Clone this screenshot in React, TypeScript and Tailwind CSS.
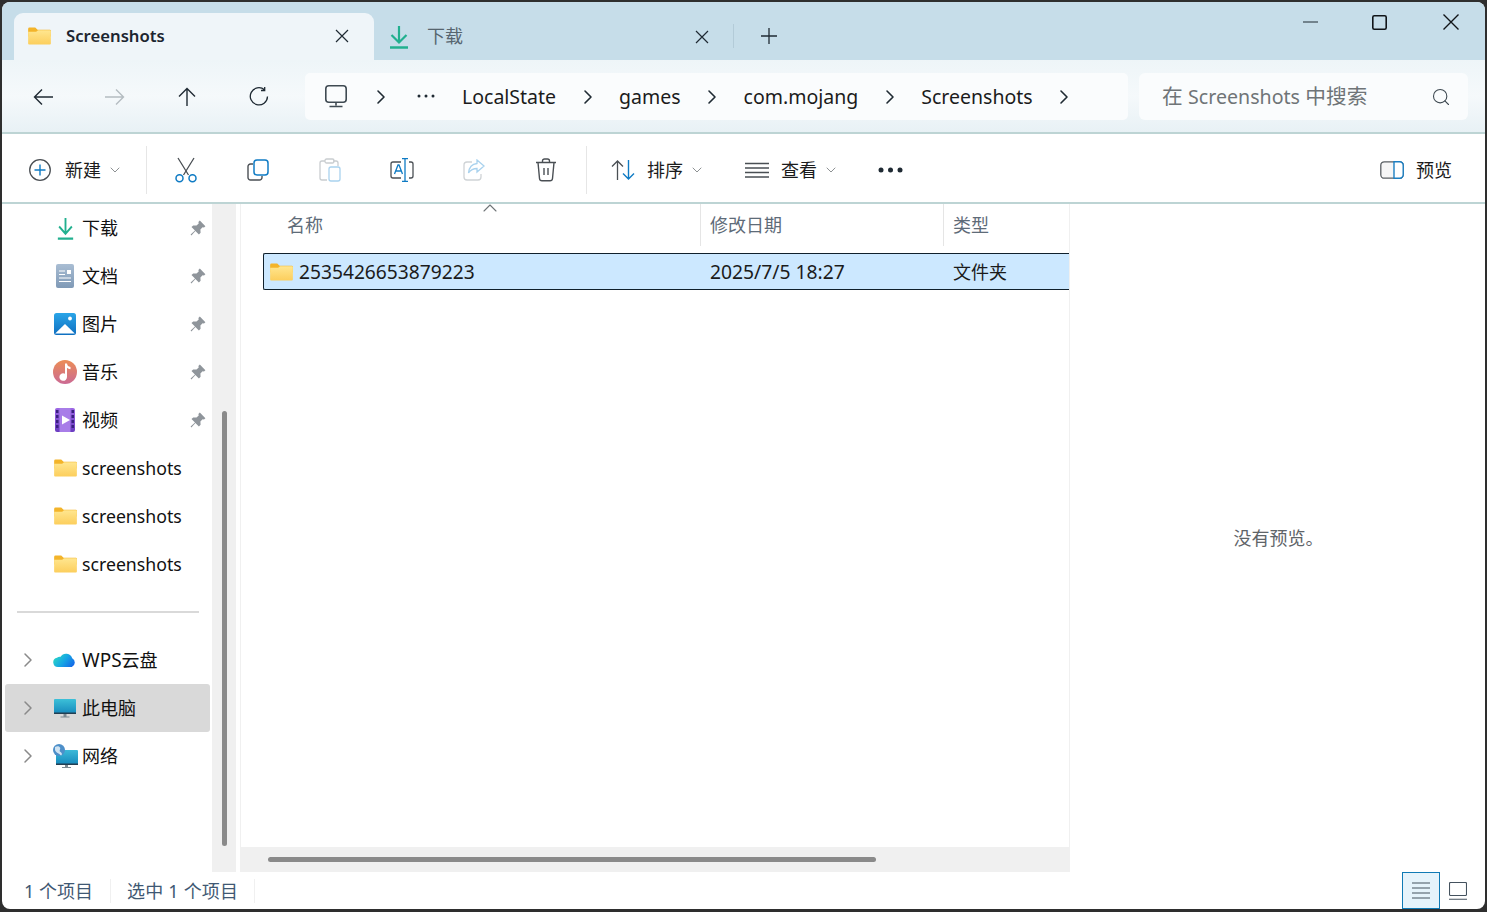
import type { ReactNode } from "react";
import { ChevronRight, ChevronDown, ChevronUp, Search } from "lucide-react";

const FONT = "font-['Noto_Sans','Noto_Sans_CJK_SC',sans-serif]";

function FolderIcon({ id = "f" }: { id?: string }) {
  return (
    <svg width="23" height="18" viewBox="0 0 24 19" className="shrink-0" aria-hidden>
      <defs>
        <linearGradient id={id} x1="0" y1="0" x2="0" y2="1">
          <stop offset="0" stopColor="#ffe68f" />
          <stop offset="1" stopColor="#fcce5c" />
        </linearGradient>
      </defs>
      <path d="M0 2a1.500 1.500 0 0 1 1.500-1.500h6L10 3h13a1 1 0 0 1 1 1v6H0z" fill="#f3b42a" />
      <path d="M0 5h8.500L10.500 3.500H23a1 1 0 0 1 1 1V17.500a1 1 0 0 1-1 1H1a1 1 0 0 1-1-1z" fill={`url(#${id})`} />
    </svg>
  );
}

function DownloadIcon({ w = 20, h = 24 }: { w?: number; h?: number }) {
  return (
    <svg width={w} height={h} viewBox="0 0 20 24" preserveAspectRatio="none" className="shrink-0" fill="none" stroke="#22b08f" aria-hidden>
      <path d="M10 1v16M2.500 10l7.500 7.500 7.500-7.500" strokeWidth="2.200" />
      <path d="M1 22.500h18" strokeWidth="2.400" />
    </svg>
  );
}

function Line({ d, w = 20, h = 20, vb = "0 0 20 20", color = "#1f2a33", sw = 1.3, className = "" }: { d: string; w?: number; h?: number; vb?: string; color?: string; sw?: number; className?: string }) {
  return (
    <svg width={w} height={h} viewBox={vb} fill="none" stroke={color} strokeWidth={sw} className={`shrink-0 ${className}`} aria-hidden>
      <path d={d} />
    </svg>
  );
}

function NavButton({ children }: { children: ReactNode }) {
  return <div className="w-[72px] h-[48px] flex items-center justify-center">{children}</div>;
}

function Crumb({ text }: { text: string }) {
  return (
    <>
      <span className="text-[19.500px] leading-[28px] text-[#1b1b1b] whitespace-nowrap">{text}</span>
      <span className="w-[63px] flex justify-center shrink-0">
        <ChevronRight size={24} strokeWidth={1.6} color="#1f2a33" />
      </span>
    </>
  );
}

function ToolIcon({ children }: { children: ReactNode }) {
  return <div className="w-[72px] h-[48px] flex items-center justify-center shrink-0">{children}</div>;
}

function Pin() {
  return (
    <svg width="16" height="16" viewBox="0 0 16 16" className="ml-auto mr-[4px] shrink-0" fill="#8f959b" aria-hidden>
      <path d="M9.800.6 15.400 6.200 14 7.600 12.600 7.300 10.400 9.500 10.600 12.800 8.900 14.500 5.400 11 1.400 15.400.6 14.600 5 10.600 1.500 7.100 3.200 5.400 6.500 5.600 8.700 3.400 8.400 2z" />
    </svg>
  );
}

function NavRow({ icon, label, pin, arrow, active }: { icon: ReactNode; label: ReactNode; pin?: boolean; arrow?: boolean; active?: boolean }) {
  return (
    <div className={`h-[48px] ml-[3px] w-[205px] flex items-center rounded-[3px] ${active ? "bg-[#d9d9d9]" : ""}`}>
      <div className="w-[44px] flex justify-center shrink-0 pl-[2px]">
        {arrow ? <ChevronRight size={24} strokeWidth={1.5} color="#8a8a8a" /> : null}
      </div>
      <div className="w-[32px] flex justify-center shrink-0 mr-[1px]">{icon}</div>
      <div className="text-[18px] leading-[24px] text-[#111] whitespace-nowrap">{label}</div>
      {pin ? <Pin /> : null}
    </div>
  );
}

function DocsIcon() {
  return (
    <svg width="18" height="24" viewBox="0 0 18 24" aria-hidden>
      <defs>
        <linearGradient id="docs" x1="0" y1="0" x2="0" y2="1">
          <stop offset="0" stopColor="#a9bdd3" />
          <stop offset="1" stopColor="#7f99b6" />
        </linearGradient>
      </defs>
      <rect width="18" height="24" rx="2" fill="url(#docs)" />
      <path d="M3 7h6M3 10.500h6M3 14h12M3 17.500h12" stroke="#fff" strokeWidth="1" />
      <rect x="11" y="6" width="4" height="4" fill="#fff" />
    </svg>
  );
}

function PicturesIcon() {
  return (
    <svg width="22" height="22" viewBox="0 0 22 22" aria-hidden>
      <defs>
        <linearGradient id="pic" x1="0" y1="0" x2="0" y2="1">
          <stop offset="0" stopColor="#2aa5e8" />
          <stop offset="1" stopColor="#0f6fc0" />
        </linearGradient>
      </defs>
      <rect width="22" height="22" rx="2.500" fill="url(#pic)" />
      <circle cx="16" cy="5.500" r="1.900" fill="#fff" />
      <path d="M1.200 20.500 11 11l9.800 9.500z" fill="#fff" />
    </svg>
  );
}

function MusicIcon() {
  return (
    <svg width="24" height="24" viewBox="0 0 24 24" aria-hidden>
      <defs>
        <linearGradient id="mus" x1="0" y1="0" x2="0" y2="1">
          <stop offset="0" stopColor="#ec8d56" />
          <stop offset="1" stopColor="#cb6a94" />
        </linearGradient>
      </defs>
      <circle cx="12" cy="12" r="12" fill="url(#mus)" />
      <path d="M12 3.500h2c.2 2 1.400 3.200 3.500 3.500v2.200c-1.500-.1-2.600-.6-3.500-1.400V17a3.800 3.800 0 1 1-2-3.300z" fill="#fff" />
    </svg>
  );
}

function VideoIcon() {
  return (
    <svg width="20" height="24" viewBox="0 0 20 24" aria-hidden>
      <defs>
        <linearGradient id="vid" x1="0" y1="0" x2="0" y2="1">
          <stop offset="0" stopColor="#9d68e4" />
          <stop offset="1" stopColor="#6a3cc0" />
        </linearGradient>
      </defs>
      <rect width="20" height="24" rx="2" fill="url(#vid)" />
      <rect x="4.500" y="0" width="11" height="24" fill="#a87de8" />
      <path d="M7 7.500l8 4.500-8 4.500z" fill="#fff" />
      {[2, 7, 12, 17].map((y) => (
        <g key={y} fill="#3a2080">
          <rect x="1" y={y} width="2.500" height="3" />
          <rect x="16.500" y={y} width="2.500" height="3" />
        </g>
      ))}
    </svg>
  );
}

function CloudIcon() {
  return (
    <svg width="24" height="17" viewBox="0 0 24 17" className="mb-[3px]" aria-hidden>
      <defs>
        <linearGradient id="cl" x1="0" y1="0.300" x2="1" y2="0.800">
          <stop offset="0" stopColor="#2bd6c4" />
          <stop offset="0.500" stopColor="#16a6e4" />
          <stop offset="1" stopColor="#1566e8" />
        </linearGradient>
      </defs>
      <path d="M5 17a4.700 4.700 0 0 1-1-9.300 4.400 4.400 0 0 1 3.600-1 6.400 6.400 0 0 1 11.600 1.600A4.800 4.800 0 0 1 18.800 17z" fill="url(#cl)" />
    </svg>
  );
}

function PcIcon() {
  return (
    <svg width="22" height="19" viewBox="0 0 22 19" aria-hidden className="shrink-0">
      <defs>
        <linearGradient id="pc" x1="0" y1="0" x2="0" y2="1">
          <stop offset="0" stopColor="#3cc0d8" />
          <stop offset="1" stopColor="#1588bc" />
        </linearGradient>
      </defs>
      <rect width="22" height="15" rx="1" fill="url(#pc)" />
      <rect y="13.500" width="22" height="1.500" fill="#243f52" />
      <path d="M9.500 15h3v2.500h-3zM6.500 17.500h9v1h-9z" fill="#7d8a92" />
    </svg>
  );
}

function NetIcon() {
  return (
    <svg width="25" height="24" viewBox="0 0 25 24" aria-hidden>
      <defs>
        <linearGradient id="net" x1="0" y1="0" x2="0" y2="1">
          <stop offset="0" stopColor="#3cb9d8" />
          <stop offset="1" stopColor="#1588bc" />
        </linearGradient>
      </defs>
      <rect x="3" y="6" width="22" height="15" rx="1" fill="url(#net)" />
      <rect x="3" y="19.500" width="22" height="1.500" fill="#243f52" />
      <path d="M12 21h3v2h-3zM9 23h9v1H9z" fill="#7d8a92" />
      <circle cx="6" cy="6" r="6" fill="#4d8fc9" />
      <path d="M2 3c2-1 4-1 5 .5S5.500 7 7.500 8 9 11 8 11.500C6 9 3 9 2 6z" fill="#cfe3f2" />
    </svg>
  );
}

function ColumnHead({ children, className }: { children: ReactNode; className: string }) {
  return (
    <div className={`h-[42px] flex items-center text-[18px] text-[#5e6b78] ${className}`}>{children}</div>
  );
}

export default function App() {
  return (
    <div className={`w-[1487px] h-[912px] bg-[#2e2e2e] pt-[2px] px-[2px] pb-[3px] ${FONT}`}>
      <div className="h-full rounded-[8px] overflow-hidden flex flex-col bg-white">
        {/* tabs */}
        <div className="h-[58px] bg-[#c6dde9] flex shrink-0 pl-[12px]">
          <div className="mt-[11px] w-[360px] h-[47px] bg-[#eff5f9] rounded-t-[9px] flex items-center pl-[14px] pb-[1px] shrink-0">
            <FolderIcon id="tabf" />
            <span className="ml-[15px] text-[16.700px] font-semibold text-[#1c2530]">Screenshots</span>
            <svg width="14" height="14" viewBox="0 0 14 14" className="ml-auto mr-[25px]" stroke="#1f2a33" strokeWidth="1.200" aria-hidden>
              <path d="M1 1l12 12M13 1 1 13" />
            </svg>
          </div>
          <div className="mt-[11px] h-[47px] w-[359px] flex items-center pl-[15px] shrink-0">
            <DownloadIcon />
            <span className="ml-[18px] text-[18px] text-[#56656f]">下载</span>
            <svg width="14" height="14" viewBox="0 0 14 14" className="ml-auto mr-[24px]" stroke="#1f2a33" strokeWidth="1.200" aria-hidden>
              <path d="M1 1l12 12M13 1 1 13" />
            </svg>
          </div>
          <div className="mt-[22px] h-[24px] w-px bg-[#b3cbd8] shrink-0" />
          <div className="mt-[22px] ml-[27px] h-[24px] flex items-center">
            <Line d="M8 0v16M0 8h16" w={16} h={16} vb="0 0 16 16" sw={1.3} />
          </div>
          <div className="ml-auto flex h-[40px] items-center pr-[26px]">
            <Line d="M0 7h15" w={15} h={14} vb="0 0 15 14" sw={1.2} />
            <svg width="15" height="15" viewBox="0 0 15 15" className="ml-[54px]" fill="none" stroke="#101418" strokeWidth="1.600" aria-hidden>
              <rect x="0.800" y="0.800" width="13.400" height="13.400" rx="1.500" />
            </svg>
            <Line d="M.5.5l15 15M15.500.5l-15 15" w={16} h={16} vb="0 0 16 16" sw={1.4} color="#101418" className="ml-[56px]" />
          </div>
        </div>

        {/* address bar */}
        <div className="h-[74px] shrink-0 border-b-2 border-[#bdd4d4] bg-linear-to-b from-[#eef5f8] via-[#f5f9fb] to-[#e8f1f5] flex items-center pl-[5px] pr-[17px] pt-[1px]">
          <NavButton>
            <Line d="M20 9H1.500M9 1.500 1.500 9 9 16.500" w={20} h={18} vb="0 0 20 18" sw={1.4} />
          </NavButton>
          <NavButton>
            <Line d="M0 9h18.500M11 1.500 18.500 9 11 16.500" w={20} h={18} vb="0 0 20 18" sw={1.4} color="#b4bcc1" />
          </NavButton>
          <NavButton>
            <Line d="M9 19V1.500M1 9.500l8-8 8 8" w={18} h={20} vb="0 0 18 20" sw={1.4} />
          </NavButton>
          <NavButton>
            <Line d="M15.500 2.800A8.600 8.600 0 1 0 18.500 9.500M15.700 0v3.500h-3.700" w={20} h={20} vb="0 0 20 20" sw={1.3} />
          </NavButton>
          <div className="ml-[10px] w-[823px] h-[47px] rounded-[5px] bg-[#fafcfd] flex items-center pl-[20px] shrink-0">
            <svg width="22" height="23" viewBox="0 0 22 23" fill="none" stroke="#3f4a52" strokeWidth="1.600" className="shrink-0" aria-hidden>
              <rect x="0.800" y="0.800" width="20.400" height="16.400" rx="3" />
              <path d="M11 17.500v3M4.500 21.500h13" />
            </svg>
            <span className="w-[67px] flex justify-center shrink-0">
              <ChevronRight size={24} strokeWidth={1.6} color="#1f2a33" />
            </span>
            <svg width="18" height="4" viewBox="0 0 18 4" fill="#1f2a33" className="shrink-0 -mt-[1px] ml-[3px]" aria-hidden>
              <circle cx="2" cy="2" r="1.500" />
              <circle cx="9" cy="2" r="1.500" />
              <circle cx="16" cy="2" r="1.500" />
            </svg>
            <span className="w-[27px] shrink-0" />
            <Crumb text="LocalState" />
            <Crumb text="games" />
            <Crumb text="com.mojang" />
            <Crumb text="Screenshots" />
          </div>
          <div className="ml-[11px] w-[329px] h-[47px] rounded-[6px] bg-[#fafcfd] flex items-center pl-[23px] pr-[17px] shrink-0">
            <span className="text-[20.700px] text-[#6f7477] whitespace-nowrap">
              在 <span className="text-[19.600px]">Screenshots</span> 中搜索
            </span>
            <Search size={20} strokeWidth={1.3} color="#3f4a52" className="ml-auto" />
          </div>
        </div>

        {/* toolbar */}
        <div className="h-[70px] shrink-0 border-b-2 border-[#bdd4d4] flex items-center pl-[27px] pr-[33px] pt-[4px] text-[18px] text-[#1b1b1b]">
          <svg width="22" height="22" viewBox="0 0 22 22" fill="none" className="shrink-0" aria-hidden>
            <circle cx="11" cy="11" r="10.300" stroke="#4a4f54" strokeWidth="1.300" />
            <path d="M11 5.500v11M5.500 11h11" stroke="#0f7bc4" strokeWidth="1.400" />
          </svg>
          <span className="ml-[14px]">新建</span>
          <ChevronDown size={16} strokeWidth={1.3} color="#7b7f82" className="ml-[6px]" />
          <div className="ml-[23px] w-px h-[48px] bg-[#e6e6e6] shrink-0" />
          <div className="w-[3px] shrink-0" />
          <ToolIcon>
            <svg width="22" height="26" viewBox="0 0 22 26" fill="none" aria-hidden>
              <path d="M3 1l10.500 17M19 1 8.500 18" stroke="#4a4f54" strokeWidth="1.300" />
              <circle cx="4.500" cy="21.300" r="3.500" stroke="#0f7bc4" strokeWidth="1.500" />
              <circle cx="17.500" cy="21.300" r="3.500" stroke="#0f7bc4" strokeWidth="1.500" />
            </svg>
          </ToolIcon>
          <ToolIcon>
            <svg width="22" height="22" viewBox="0 0 22 22" fill="none" aria-hidden>
              <path d="M6 5H3.500A2.500 2.500 0 0 0 1 7.500v11A2.500 2.500 0 0 0 3.500 21h9a2.500 2.500 0 0 0 2.500-2.500V17" stroke="#4a4f54" strokeWidth="1.400" />
              <rect x="7" y="1" width="14" height="15" rx="3" stroke="#0f7bc4" strokeWidth="1.500" />
            </svg>
          </ToolIcon>
          <ToolIcon>
            <svg width="22" height="24" viewBox="0 0 22 24" fill="none" aria-hidden>
              <path d="M14 3h3a2 2 0 0 1 2 2v3M6 3H3a2 2 0 0 0-2 2v15a2 2 0 0 0 2 2h5" stroke="#c9cdd0" strokeWidth="1.300" />
              <rect x="6" y="1" width="9" height="4" rx="1.500" stroke="#c9cdd0" strokeWidth="1.300" />
              <rect x="10" y="9" width="11" height="14" rx="2" stroke="#a9d2ee" strokeWidth="1.300" />
            </svg>
          </ToolIcon>
          <ToolIcon>
            <svg width="24" height="24" viewBox="0 0 24 24" fill="none" aria-hidden>
              <path d="M11 4H3a2 2 0 0 0-2 2v12a2 2 0 0 0 2 2h8M19 4h2a2 2 0 0 1 2 2v12a2 2 0 0 1-2 2h-2" stroke="#4a4f54" strokeWidth="1.300" />
              <path d="M15 .7v22.600M12 .7h6M12 23.300h6M4.500 16 8 7h1l3.500 9M5.800 13h5.400" stroke="#0f7bc4" strokeWidth="1.300" />
            </svg>
          </ToolIcon>
          <ToolIcon>
            <svg width="22" height="22" viewBox="0 0 22 22" fill="none" aria-hidden>
              <path d="M9 3H4a3 3 0 0 0-3 3v12a3 3 0 0 0 3 3h11a3 3 0 0 0 3-3v-3" stroke="#cfd3d6" strokeWidth="1.300" />
              <path d="M14 1l7 6-7 6V9.500C10 9.500 7.500 11 5.500 14 6 9 9 5 14 4.500z" stroke="#a9d2ee" strokeWidth="1.300" />
            </svg>
          </ToolIcon>
          <ToolIcon>
            <svg width="22" height="24" viewBox="0 0 22 24" fill="none" stroke="#4a4f54" strokeWidth="1.400" aria-hidden>
              <path d="M1 4.500h20M7.500 4.500V3a2 2 0 0 1 2-2h3a2 2 0 0 1 2 2v1.500M3 4.500l1.500 16a2.500 2.500 0 0 0 2.500 2.300h8a2.500 2.500 0 0 0 2.500-2.300L19 4.500M9 10v7M13 10v7" />
            </svg>
          </ToolIcon>
          <div className="ml-[4px] w-px h-[48px] bg-[#e6e6e6] shrink-0" />
          <svg width="25" height="20" viewBox="0 0 25 20" fill="none" className="ml-[24px] shrink-0" aria-hidden>
            <path d="M6.500 20V1M1 6.500 6.500 1 12 6.500" stroke="#4a4f54" strokeWidth="1.300" />
            <path d="M17.500 0v19M12 13.500l5.500 5.500 5.500-5.500" stroke="#0f7bc4" strokeWidth="1.400" />
          </svg>
          <span className="ml-[11px]">排序</span>
          <ChevronDown size={16} strokeWidth={1.3} color="#7b7f82" className="ml-[6px]" />
          <svg width="24" height="16" viewBox="0 0 24 16" fill="none" stroke="#4a4f54" strokeWidth="1.300" className="ml-[40px] shrink-0" aria-hidden>
            <path d="M0 1.500h24M0 6h24M0 10.500h24M0 15h24" />
          </svg>
          <span className="ml-[12px]">查看</span>
          <ChevronDown size={16} strokeWidth={1.3} color="#7b7f82" className="ml-[6px]" />
          <svg width="25" height="6" viewBox="0 0 25 6" fill="#1f2a33" className="ml-[39px] shrink-0" aria-hidden>
            <circle cx="3" cy="3" r="2.500" />
            <circle cx="12.500" cy="3" r="2.500" />
            <circle cx="22" cy="3" r="2.500" />
          </svg>
          <svg width="24" height="18" viewBox="0 0 24 18" fill="none" className="ml-auto shrink-0" aria-hidden>
            <rect x="0.800" y="0.800" width="22.400" height="16.400" rx="3.500" fill="#f6f6f6" stroke="#5a5f63" strokeWidth="1.300" />
            <path d="M14 .8h5.700a3.500 3.500 0 0 1 3.500 3.500v9.400a3.500 3.500 0 0 1-3.500 3.500H14z" fill="#fff" stroke="#1c7fc2" strokeWidth="1.400" />
          </svg>
          <span className="ml-[12px]">预览</span>
        </div>

        {/* body */}
        <div className="flex-1 min-h-0 flex">
          <div className="w-[210px] shrink-0">
            <NavRow icon={<DownloadIcon w={17} h={23} />} label="下载" pin />
            <NavRow icon={<DocsIcon />} label="文档" pin />
            <NavRow icon={<PicturesIcon />} label="图片" pin />
            <NavRow icon={<MusicIcon />} label="音乐" pin />
            <NavRow icon={<VideoIcon />} label="视频" pin />
            <NavRow icon={<FolderIcon id="n1" />} label={<span className="text-[17.700px]">screenshots</span>} />
            <NavRow icon={<FolderIcon id="n2" />} label={<span className="text-[17.700px]">screenshots</span>} />
            <NavRow icon={<FolderIcon id="n3" />} label={<span className="text-[17.700px]">screenshots</span>} />
            <div className="mt-[23px] mb-[23px] ml-[15px] w-[182px] h-[2px] bg-[#d9d9d9]" />
            <NavRow icon={<CloudIcon />} label={<><span className="text-[19px]">WPS</span>云盘</>} arrow />
            <NavRow icon={<PcIcon />} label="此电脑" arrow active />
            <NavRow icon={<NetIcon />} label="网络" arrow />
          </div>
          <div className="w-[24px] shrink-0 bg-[#f0f0f0] pt-[207px] pb-[26px] flex justify-center">
            <div className="w-[5px] h-full rounded-full bg-[#8a8a8a]" />
          </div>
          <div className="w-[4px] shrink-0" />
          <div className="w-[830px] shrink-0 flex flex-col border-x border-[#f0f0f0]">
            <div className="relative flex shrink-0">
              <ColumnHead className="w-[459px] pl-[46px]">名称</ColumnHead>
              <ColumnHead className="w-[243px] pl-[9px] border-l border-[#e5e5e5]">修改日期</ColumnHead>
              <ColumnHead className="flex-1 pl-[9px] border-l border-[#e5e5e5]">类型</ColumnHead>
              <ChevronUp size={24} strokeWidth={1.1} color="#6f7477" className="absolute left-[237px] -top-[8px]" />
            </div>
            <div className="mt-[7px] ml-[22px] h-[37px] border border-r-0 border-[#10202c] rounded-l-[2px] bg-[#cce8ff] flex items-center text-[#1b1b1b]">
              <div className="w-[35px] pl-[6px] shrink-0">
                <FolderIcon id="row" />
              </div>
              <div className="w-[411px] text-[19.200px] pt-[1px]">2535426653879223</div>
              <div className="w-[243px] text-[19.300px] pt-[1px]">2025/7/5 18:27</div>
              <div className="text-[18px] pt-[1px]">文件夹</div>
            </div>
            <div className="mt-auto h-[25px] bg-[#f0f0f0] pl-[27px] flex items-center">
              <div className="w-[608px] h-[5px] rounded-full bg-[#8a8a8a]" />
            </div>
          </div>
          <div className="flex-1 flex items-center justify-center pl-[2px]">
            <span className="text-[18px] text-[#5f6468]">没有预览。</span>
          </div>
        </div>

        {/* status bar */}
        <div className="h-[37px] shrink-0 flex items-center pl-[22px] text-[18px] text-[#3f5873]">
          <span className="mt-[1px]">1 个项目</span>
          <div className="ml-[17px] w-px h-[24px] bg-[#f0f0f0]" />
          <span className="ml-[16px] mt-[1px] tracking-[0.200px]">选中 1 个项目</span>
          <div className="ml-[16px] w-px h-[24px] bg-[#f0f0f0]" />
          <div className="ml-auto h-full w-[38px] border border-[#0f7ab5] bg-[#e5f3fb] flex items-center justify-center">
            <Line d="M0 1h18M0 6h18M0 11h18M0 16h18" w={18} h={17} vb="0 0 18 17" sw={1.1} color="#44525e" />
          </div>
          <svg width="18" height="18" viewBox="0 0 18 18" fill="none" stroke="#44525e" strokeWidth="1.100" className="ml-[9px] mr-[18px] shrink-0" aria-hidden>
            <rect x="0.500" y="0.500" width="17" height="13" rx="1" />
            <path d="M0 17.300h18" />
          </svg>
        </div>
      </div>
    </div>
  );
}
